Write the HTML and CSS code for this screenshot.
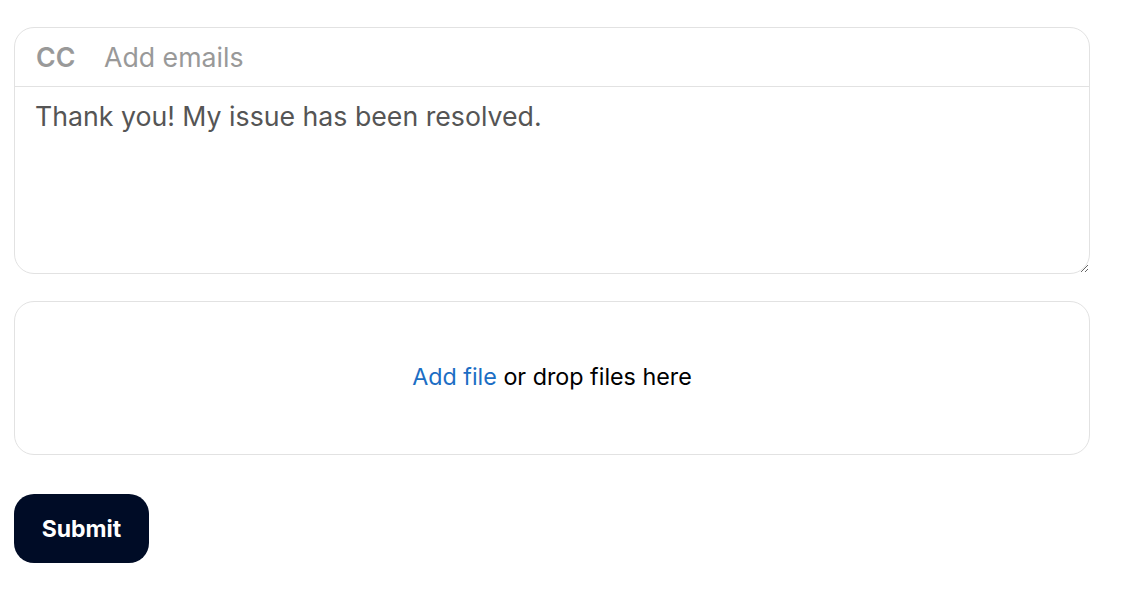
FILE: index.html
```html
<!DOCTYPE html>
<html>
<head>
<meta charset="utf-8">
<link rel="stylesheet" href="styles.css">
</head>
<body>
<form class="form">
  <div class="message-box">
    <div class="cc-row">
      <span class="cc-label">CC</span>
      <span class="cc-placeholder">Add emails</span>
    </div>
    <textarea class="message">Thank you! My issue has been resolved.</textarea>
  </div>
  <div class="dropzone">
    <span class="add-file">Add file</span>&nbsp;or drop files here
  </div>
  <button type="button" class="submit">Submit</button>
</form>
</body>
</html>
```
FILE: styles.css
```css
html, body {
  margin: 0;
  padding: 0;
  background: #fff;
}
body {
  font-family: Inter, "Noto Sans", sans-serif;
}
.form {
  width: 1076px;
  margin: 27px 0 0 14px;
  display: flex;
  flex-direction: column;
  align-items: flex-start;
}
.message-box {
  width: 100%;
  box-sizing: border-box;
  border: 1px solid #e2e2e2;
  border-radius: 20px;
  display: flex;
  flex-direction: column;
}
.cc-row {
  height: 58px;
  border-bottom: 1px solid #e2e2e2;
  display: flex;
  align-items: center;
  padding-left: 21px;
}
.cc-label {
  font-size: 26.7px;
  font-weight: 600;
  color: #999;
  width: 68px;
}
.cc-placeholder {
  font-size: 26.7px;
  color: #999;
}
.message {
  display: block;
  width: 100%;
  box-sizing: border-box;
  height: 186px;
  border: none;
  outline: none;
  padding: 13px 20px;
  font-family: Inter, "Noto Sans", sans-serif;
  font-size: 26.7px;
  line-height: 32px;
  color: #555;
  resize: vertical;
  background: transparent;
  border-radius: 0 0 20px 20px;
}
.dropzone {
  margin-top: 27px;
  width: 100%;
  height: 154px;
  box-sizing: border-box;
  border: 1px solid #e2e2e2;
  border-radius: 20px;
  padding-bottom: 4px;
  display: flex;
  align-items: center;
  justify-content: center;
  font-size: 23.3px;
  color: #000;
}
.add-file {
  color: #1c6ec4;
}
.submit {
  margin-top: 39px;
  width: 135px;
  height: 69px;
  border: none;
  border-radius: 20px;
  background: #000c26;
  color: #fff;
  font-family: Inter, "Noto Sans", sans-serif;
  font-size: 23px;
  font-weight: 700;
  padding: 0;
}
```
